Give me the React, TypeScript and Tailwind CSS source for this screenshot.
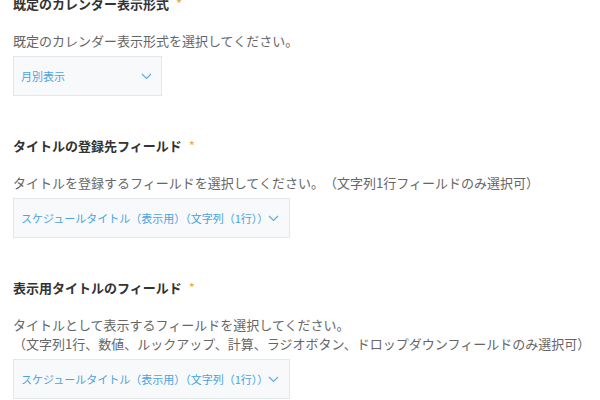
import React from 'react';

const FONT = { fontFamily: '"Noto Sans CJK JP", "Noto Sans", sans-serif' };

const Chevron: React.FC = () => (
  <svg width="11" height="7" viewBox="0 0 11 7" className="shrink-0">
    <path d="M1 1 L5.5 5.5 L10 1" fill="none" stroke="#5dade2" strokeWidth="1.2" />
  </svg>
);

const SelectBox: React.FC<{ label: string; width: string; pr: string }> = ({ label, width, pr }) => (
  <div
    className={`mt-[6px] h-[40px] ${width} ${pr} flex items-center justify-between pl-[7px] bg-[#f7f9fa] border border-[#e3e7e8] text-[11px] text-[#4aa3df]`}
  >
    <span className="whitespace-nowrap">{label}</span>
    <Chevron />
  </div>
);

const Section: React.FC<{ title: string; desc: string[]; value: string; width: string; pr: string }> = ({
  title,
  desc,
  value,
  width,
  pr,
}) => (
  <div className="mb-[40px]">
    <div className="h-[20px] leading-[20px] text-[13px] font-bold text-[#333] [text-spacing-trim:space-all]">
      {title}
      <span className="ml-[7px] font-normal text-[#e2ac4c]">*</span>
    </div>
    <div className="mt-[17px] text-[13px] leading-[19px] text-[#666] [text-spacing-trim:space-all]">
      {desc.map((d, i) => (
        <div key={i} className="whitespace-nowrap">{d}</div>
      ))}
    </div>
    <SelectBox label={value} width={width} pr={pr} />
  </div>
);

export default function App() {
  return (
    <div className="w-[600px] h-[400px] overflow-hidden bg-white" style={FONT}>
      <div className="px-[13px] -mt-[6px]">
        <Section
          title="既定のカレンダー表示形式"
          desc={['既定のカレンダー表示形式を選択してください。']}
          value="月別表示"
          width="w-[149px]"
          pr="pr-[9px]"
        />
        <Section
          title="タイトルの登録先フィールド"
          desc={['タイトルを登録するフィールドを選択してください。（文字列1行フィールドのみ選択可）']}
          value="スケジュールタイトル（表示用）（文字列（1行））"
          width="w-[277px]"
          pr="pr-[12px]"
        />
        <Section
          title="表示用タイトルのフィールド"
          desc={[
            'タイトルとして表示するフィールドを選択してください。',
            '（文字列1行、数値、ルックアップ、計算、ラジオボタン、ドロップダウンフィールドのみ選択可）',
          ]}
          value="スケジュールタイトル（表示用）（文字列（1行））"
          width="w-[277px]"
          pr="pr-[12px]"
        />
      </div>
    </div>
  );
}
